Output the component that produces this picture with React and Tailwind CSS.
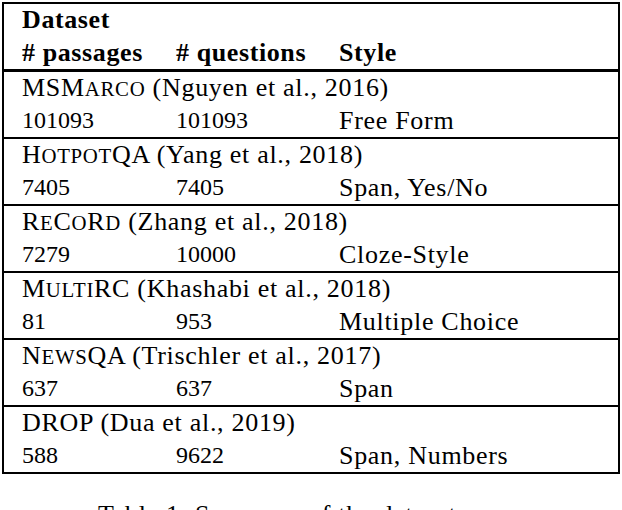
import React from "react";

const SC = ({ children }) => <span className="text-[0.8em] uppercase">{children}</span>;

const groups = [
  { name: <>MSM<SC>arco</SC> (Nguyen et al., 2016)</>, a: "101093", b: "101093", c: "Free Form" },
  { name: <>H<SC>otpot</SC>QA (Yang et al., 2018)</>, a: "7405", b: "7405", c: "Span, Yes/No" },
  { name: <>R<SC>e</SC>C<SC>o</SC>R<SC>d</SC> (Zhang et al., 2018)</>, a: "7279", b: "10000", c: "Cloze-Style" },
  { name: <>M<SC>ulti</SC>RC (Khashabi et al., 2018)</>, a: "81", b: "953", c: "Multiple Choice" },
  { name: <>N<SC>ews</SC>QA (Trischler et al., 2017)</>, a: "637", b: "637", c: "Span" },
  { name: <>DROP (Dua et al., 2019)</>, a: "588", b: "9622", c: "Span, Numbers" },
];

function Row({ a, b, c }) {
  return (
    <div className="grid grid-cols-[154px_163px_1fr] h-[32.5px] leading-[31px]">
      <span className="text-[24px]">{a}</span>
      <span className="text-[24px]">{b}</span>
      <span className="text-[26px] tracking-[0.7px] whitespace-nowrap">{c}</span>
    </div>
  );
}

export default function App() {
  return (
    <div className="w-[622px] h-[510px] bg-white overflow-hidden text-black [font-family:'Liberation_Serif',serif]">
      <div className="ml-[2px] mt-[2px] w-[618px] border-2 border-black">
        <div className="pl-[18px] border-b-[3px] border-black font-bold text-[26px] tracking-[0.6px]">
          <div className="h-[32.5px] leading-[31px]">Dataset</div>
          <div className="grid grid-cols-[154px_163px_1fr] h-[32.5px] leading-[31px] whitespace-nowrap">
            <span># passages</span>
            <span># questions</span>
            <span>Style</span>
          </div>
        </div>
        {groups.map((g, i) => (
          <div key={i} className={"pl-[18px] " + (i < groups.length - 1 ? "border-b-2 border-black" : "")}>
            <div className="h-[32.5px] leading-[31px] whitespace-nowrap text-[26px] tracking-[0.7px]">{g.name}</div>
            <Row a={g.a} b={g.b} c={g.c} />
          </div>
        ))}
      </div>
      <div className="mt-[26px] pl-[98px] text-[26px] tracking-[0.7px] leading-[30px] whitespace-nowrap">Table 1: Summary of the datasets.</div>
    </div>
  );
}
